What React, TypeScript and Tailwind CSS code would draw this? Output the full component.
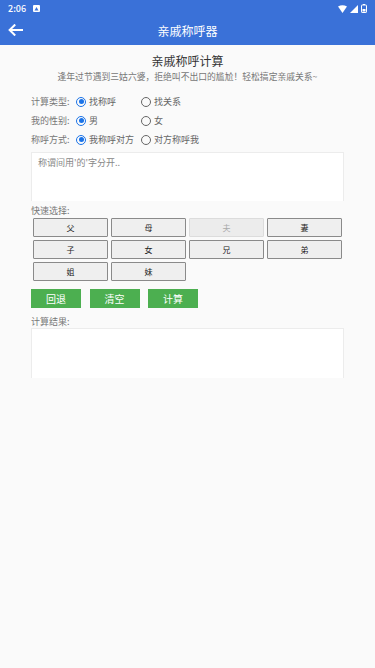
import React from "react";

const FONT = '"Noto Sans CJK SC", "Noto Sans", sans-serif';

const Radio = ({ checked, label }: { checked: boolean; label: string }) => (
  <span className="flex items-center gap-[3px]">
    {checked ? (
      <span className="flex h-[10px] w-[10px] items-center justify-center rounded-full border-[1.5px] border-[#1a73e8]">
        <span className="h-[5px] w-[5px] rounded-full bg-[#1a73e8]" />
      </span>
    ) : (
      <span className="h-[10px] w-[10px] rounded-full border border-[#666]" />
    )}
    <span className="text-[9px] text-[#666]">{label}</span>
  </span>
);

const OptionRow = ({ label, a, b }: { label: string; a: string; b: string }) => (
  <div className="flex h-[19px] items-center">
    <span className="w-[45px] text-[9px] text-[#777]">{label}</span>
    <div className="w-[65px]">
      <Radio checked label={a} />
    </div>
    <Radio checked={false} label={b} />
  </div>
);

const keys = ["父", "母", "夫", "妻", "子", "女", "兄", "弟", "姐", "妹"];

const App = () => {
  return (
    <div className="h-[668px] w-[375px] overflow-hidden bg-[#fafafa]" style={{ fontFamily: FONT }}>
      <header className="bg-[#3a71d8] text-white">
        <div className="flex h-[16px] items-center justify-between px-[8px] pt-[1px]">
          <div className="flex items-center gap-[7px]">
            <span className="text-[9px] font-medium">2:06</span>
            <svg width="7" height="7" viewBox="0 0 7 7">
              <rect x="0" y="0" width="7" height="7" rx="1" fill="white" />
              <path d="M1.5 5.5 L3.5 2 L5.5 5.5 Z" fill="#3a71d8" />
            </svg>
          </div>
          <div className="flex items-center gap-[3px]">
            <svg width="9" height="8" viewBox="0 0 9 8">
              <path d="M0 1.6 Q4.5 -1.2 9 1.6 L4.5 8 Z" fill="white" />
            </svg>
            <svg width="8" height="8" viewBox="0 0 8 8">
              <path d="M8 0 L8 8 L0 8 Z" fill="white" />
            </svg>
            <svg width="6" height="9" viewBox="0 0 6 9">
              <rect x="0.5" y="1" width="5" height="7.5" rx="0.6" fill="none" stroke="white" strokeWidth="1" />
              <rect x="2" y="0" width="2" height="1" fill="white" />
              <rect x="1.5" y="5" width="3" height="2.5" fill="white" />
            </svg>
          </div>
        </div>
        <div className="relative flex h-[29px] items-center justify-center">
          <svg className="absolute left-[8px] top-[8px]" width="15" height="12" viewBox="0 0 15 12">
            <path d="M14 6 H2 M6.5 1.2 L1.6 6 L6.5 10.8" fill="none" stroke="white" strokeWidth="2" strokeLinecap="square" />
          </svg>
          <span className="text-[12px]">亲戚称呼器</span>
        </div>
      </header>

      <main className="px-[31px] pt-[8px]">
        <h1 className="text-center text-[12px] font-normal leading-[16px] text-[#333]">亲戚称呼计算</h1>
        <p className="mt-[2px] text-center text-[8.8px] leading-[12px] text-[#777]">
          逢年过节遇到三姑六婆，拒绝叫不出口的尴尬！轻松搞定亲戚关系~
        </p>

        <div className="mt-[9px]">
          <OptionRow label="计算类型:" a="找称呼" b="找关系" />
          <OptionRow label="我的性别:" a="男" b="女" />
          <OptionRow label="称呼方式:" a="我称呼对方" b="对方称呼我" />
        </div>

        <div className="mt-[3px] h-[49px] border border-b-0 border-[#ececec] bg-white px-[6px] pt-[4px] text-[9px] leading-[12px] text-[#888]">
          称谓间用'的'字分开..
        </div>

        <div className="mt-[4px] text-[9px] leading-[12px] text-[#777]">快速选择:</div>

        <div className="mx-[2px] mt-[1px] grid grid-cols-4 gap-[3px]">
          {keys.map((k) => {
            const disabled = k === "夫";
            return (
              <button
                key={k}
                className={
                  disabled
                    ? "h-[19px] rounded-[1px] border border-[#dcdcdc] bg-[#ececec] text-[8px] text-[#aaa]"
                    : "h-[19px] rounded-[1px] border border-[#8a8a8a] bg-[#efefef] text-[8px] text-[#222]"
                }
              >
                {k}
              </button>
            );
          })}
        </div>

        <div className="mt-[8px] flex gap-[8.5px]">
          {["回退", "清空", "计算"].map((t) => (
            <button key={t} className="h-[19px] w-[50px] bg-[#4caf50] text-[10px] text-white">
              {t}
            </button>
          ))}
        </div>

        <div className="mt-[8px] text-[9px] leading-[12px] text-[#777]">计算结果:</div>
        <div className="h-[50px] border border-b-0 border-[#ececec] bg-white" />
      </main>
    </div>
  );
};

export default App;
